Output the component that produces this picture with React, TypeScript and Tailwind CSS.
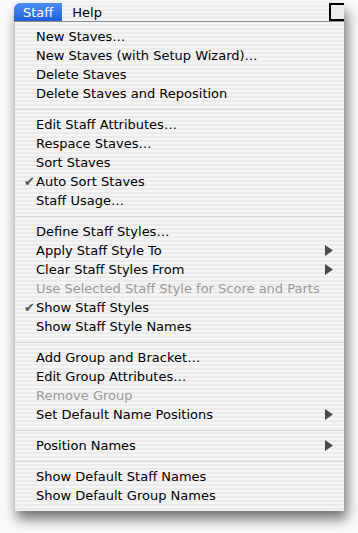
import React from "react";

type Item =
  | { kind: "sep" }
  | { kind: "item"; label: string; checked?: boolean; disabled?: boolean; submenu?: boolean };

const items: Item[] = [
  { kind: "item", label: "New Staves…" },
  { kind: "item", label: "New Staves (with Setup Wizard)…" },
  { kind: "item", label: "Delete Staves" },
  { kind: "item", label: "Delete Staves and Reposition" },
  { kind: "sep" },
  { kind: "item", label: "Edit Staff Attributes…" },
  { kind: "item", label: "Respace Staves…" },
  { kind: "item", label: "Sort Staves" },
  { kind: "item", label: "Auto Sort Staves", checked: true },
  { kind: "item", label: "Staff Usage…" },
  { kind: "sep" },
  { kind: "item", label: "Define Staff Styles…" },
  { kind: "item", label: "Apply Staff Style To", submenu: true },
  { kind: "item", label: "Clear Staff Styles From", submenu: true },
  { kind: "item", label: "Use Selected Staff Style for Score and Parts", disabled: true },
  { kind: "item", label: "Show Staff Styles", checked: true },
  { kind: "item", label: "Show Staff Style Names" },
  { kind: "sep" },
  { kind: "item", label: "Add Group and Bracket…" },
  { kind: "item", label: "Edit Group Attributes…" },
  { kind: "item", label: "Remove Group", disabled: true },
  { kind: "item", label: "Set Default Name Positions", submenu: true },
  { kind: "sep" },
  { kind: "item", label: "Position Names", submenu: true },
  { kind: "sep" },
  { kind: "item", label: "Show Default Staff Names" },
  { kind: "item", label: "Show Default Group Names" },
];

const stripes =
  "bg-[repeating-linear-gradient(to_bottom,#f5f5f5_0px,#f5f5f5_2px,#ebebeb_2px,#ebebeb_4px)]";

function SubmenuArrow() {
  return (
    <svg width="8" height="11" viewBox="0 0 8 11" className="shrink-0">
      <path d="M0 0 L8 5.5 L0 11 Z" fill="#4a4a4a" />
    </svg>
  );
}

function MenuRow({ item }: { item: Extract<Item, { kind: "item" }> }) {
  return (
    <div className="relative flex h-[19px] items-center pl-[21px] pr-[11px]">
      {item.checked && (
        <span className="absolute left-[9px] top-0 text-[13px] leading-[19px] text-[#555]">✔</span>
      )}
      <span className={item.disabled ? "flex-1 text-[#9a9a9a]" : "flex-1 text-black"}>{item.label}</span>
      {item.submenu && <SubmenuArrow />}
    </div>
  );
}

export default function App() {
  return (
    <div
      className="h-[533px] w-[358px] overflow-hidden bg-[#fafafa] pl-[14px] pt-[3px]"
      style={{ fontFamily: '"DejaVu Sans", "Liberation Sans", sans-serif' }}
    >
      <div className="w-[330px] text-[13px] leading-[19px] shadow-[3px_8px_12px_rgba(0,0,0,0.55)]">
        <div className={`flex h-[19px] items-stretch rounded-t-[6px] ${stripes} border-b border-[#8c8c8c]`}>
          <div className="flex items-center rounded-tl-[6px] bg-[linear-gradient(to_bottom,#4b8ff2,#1e5fd9)] px-[9px] text-white">
            Staff
          </div>
          <div className="flex items-center px-[10px] text-black">Help</div>
          <div className="flex-1" />
          <div className="h-[18px] w-[15px] border-[2px] border-r-0 border-black bg-[#ececec]" />
        </div>
        <div className={`${stripes} border-l border-[#c8c8c8] pb-[6px] pt-[5px]`}>
          {items.map((item, i) =>
            item.kind === "sep" ? (
              <div key={i} className="flex h-[12px] items-center">
                <div className="h-px w-full bg-[#d6d6d6]" />
              </div>
            ) : (
              <MenuRow key={i} item={item} />
            )
          )}
        </div>
      </div>
    </div>
  );
}
